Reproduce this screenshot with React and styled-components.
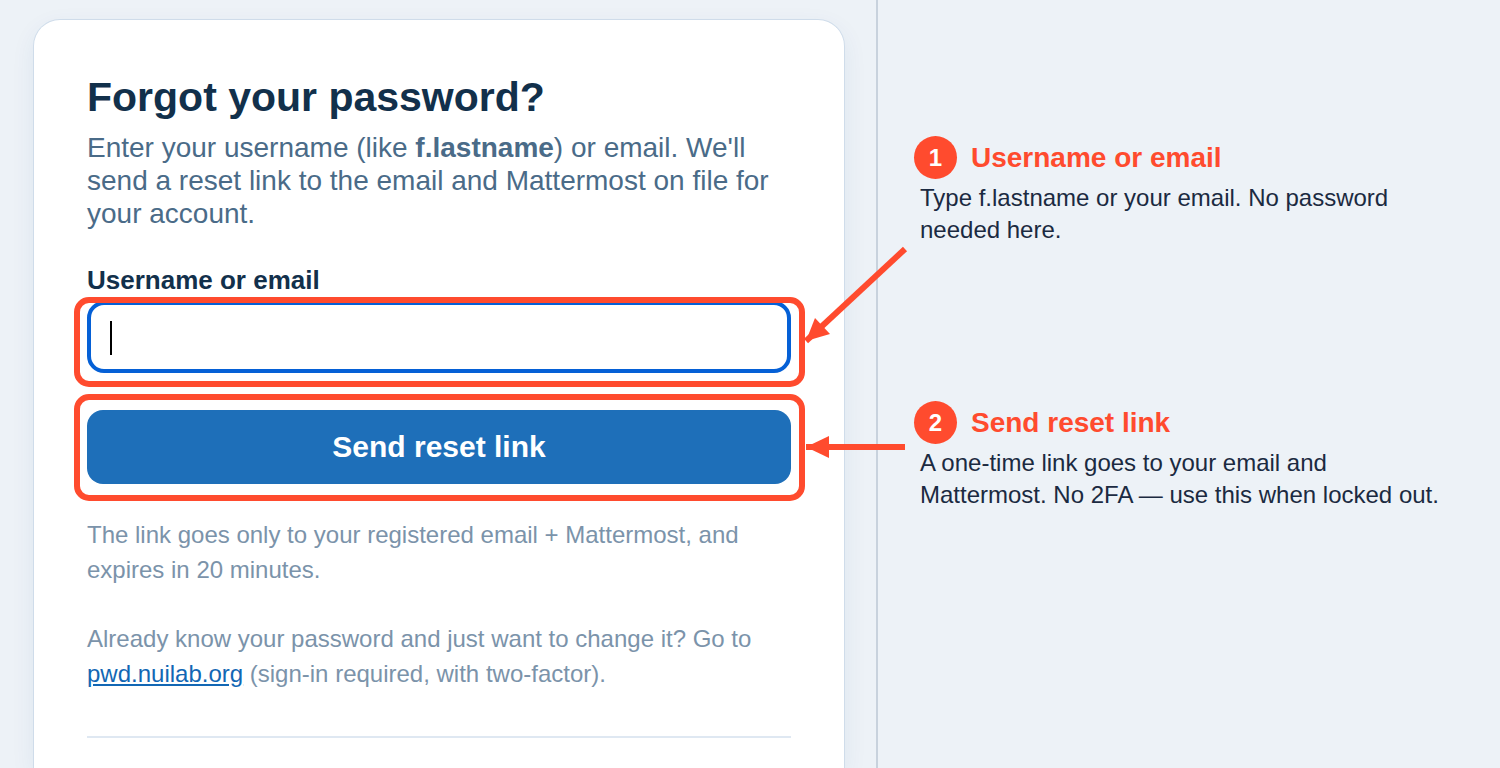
import styled, { createGlobalStyle } from "styled-components";

const ACCENT = "#ff4b2e";

const callouts = [
  {
    title: "Username or email",
    text: "Type f.lastname or your email. No password needed here.",
    arrow: { top: 102, height: 120, from: [101, 11], to: [2, 103], head: "2,103 11,80 26,96" },
  },
  {
    title: "Send reset link",
    text: "A one-time link goes to your email and Mattermost. No 2FA — use this when locked out.",
    arrow: { top: 26, height: 40, from: [101, 20], to: [2, 20], head: "2,20 25,9 25,31" },
  },
];

// arrow that points from a callout back to the highlighted field
const Arrow = ({ top, height, from, to, head }) => (
  <ArrowSvg $top={top} width="110" height={height} aria-hidden="true">
    <line x1={from[0]} y1={from[1]} x2={to[0]} y2={to[1]} stroke={ACCENT} strokeWidth="6" />
    <polygon points={head} fill={ACCENT} />
  </ArrowSvg>
);

const App = () => {
  return (
    <Page>
      <GlobalStyle />
      <Preview>
        <Card onSubmit={(event) => event.preventDefault()}>
          <Title>Forgot your password?</Title>
          <Intro>
            Enter your username (like <b>f.lastname</b>) or email. We'll send a reset link to the
            email and Mattermost on file for your account.
          </Intro>
          <Label htmlFor="username">Username or email</Label>
          <Highlight $inset="-4px -14px -14px -13px" $gap={37}>
            <Input id="username" type="text" />
            <Caret />
          </Highlight>
          <Highlight $inset="-16px -14px -17px -13px" $gap={33}>
            <Button type="submit">Send reset link</Button>
          </Highlight>
          <Hint>The link goes only to your registered email + Mattermost, and expires in 20 minutes.</Hint>
          <Hint>
            Already know your password and just want to change it? Go to{" "}
            <Link href="#pwd">pwd.nuilab.org</Link> (sign-in required, with two-factor).
          </Hint>
          <Divider />
        </Card>
      </Preview>
      <Notes>
        {callouts.map((callout, index) => (
          <Callout key={callout.title}>
            <CalloutHeader>
              <Badge>{index + 1}</Badge>
              <CalloutTitle>{callout.title}</CalloutTitle>
            </CalloutHeader>
            <CalloutText>{callout.text}</CalloutText>
            <Arrow {...callout.arrow} />
          </Callout>
        ))}
      </Notes>
    </Page>
  );
};

export default App;

const GlobalStyle = createGlobalStyle`
  * {
    box-sizing: border-box;
  }
  body {
    margin: 0;
    background-color: #edf2f7;
    font-family: "Liberation Sans", Arial, sans-serif;
  }
`;

const Page = styled.main`
  display: grid;
  grid-template-columns: minmax(0, 1fr) 624px;
  min-height: 100vh;
`;

const Preview = styled.section`
  display: flex;
  padding: 19px 31px 0 33px;
  overflow: hidden;
`;

const Card = styled.form`
  flex: 1;
  padding: 53px 53px 28px;
  background-color: white;
  border: 1px solid #cfdcea;
  border-bottom: none;
  border-radius: 27px 27px 0 0;
  box-shadow: 0 8px 24px rgba(30, 70, 140, 0.07);
`;

const Title = styled.h1`
  margin: 0 0 9px;
  font-size: 41px;
  line-height: 49px;
  color: #12304b;
`;

const Intro = styled.p`
  margin: 0 0 35px;
  font-size: 28px;
  line-height: 33px;
  color: #4a6b88;
`;

const Label = styled.label`
  display: block;
  margin-bottom: 5px;
  font-size: 26px;
  line-height: 31px;
  font-weight: bold;
  color: #12304b;
`;

const Highlight = styled.div`
  position: relative;
  margin-bottom: ${props => props.$gap}px;

  &::after {
    content: "";
    position: absolute;
    inset: ${props => props.$inset};
    border: 6px solid ${ACCENT};
    border-radius: 15px;
    pointer-events: none;
  }
`;

const Input = styled.input`
  display: block;
  width: 100%;
  height: 72px;
  padding: 0 20px;
  border: 4px solid #0560d6;
  border-radius: 17px;
  outline: none;
  font-family: inherit;
  font-size: 28px;
  caret-color: transparent;
`;

const Caret = styled.span`
  position: absolute;
  top: 20px;
  left: 23px;
  width: 2px;
  height: 34px;
  background-color: black;
`;

const Button = styled.button`
  display: block;
  width: 100%;
  height: 74px;
  border: none;
  border-radius: 16px;
  background-color: #1e6fb9;
  color: white;
  font-family: inherit;
  font-size: 30px;
  font-weight: bold;
  cursor: pointer;
`;

const Hint = styled.p`
  margin: 0 0 34px;
  font-size: 24px;
  line-height: 35px;
  color: #7b93aa;
`;

const Link = styled.a`
  color: #1267b4;
`;

const Divider = styled.hr`
  margin: 45px 0 0;
  border: none;
  border-top: 2px solid #dfe8f2;
`;

const Notes = styled.aside`
  display: flex;
  flex-direction: column;
  gap: 155px;
  padding: 136px 48px 0 36px;
  border-left: 2px solid #c8d2dd;
`;

const Callout = styled.section`
  position: relative;
`;

const CalloutHeader = styled.div`
  display: flex;
  align-items: center;
  gap: 14px;
  margin-bottom: 3px;
`;

const Badge = styled.span`
  display: flex;
  align-items: center;
  justify-content: center;
  width: 43px;
  height: 43px;
  border-radius: 50%;
  background-color: ${ACCENT};
  color: white;
  font-size: 24px;
  font-weight: bold;
`;

const CalloutTitle = styled.h2`
  margin: 0;
  font-size: 28px;
  line-height: 32px;
  color: ${ACCENT};
`;

const CalloutText = styled.p`
  margin: 0;
  padding-left: 6px;
  font-size: 24px;
  line-height: 32px;
  color: #1b2a41;
`;

const ArrowSvg = styled.svg`
  position: absolute;
  top: ${props => props.$top}px;
  left: -110px;
  pointer-events: none;
`;
